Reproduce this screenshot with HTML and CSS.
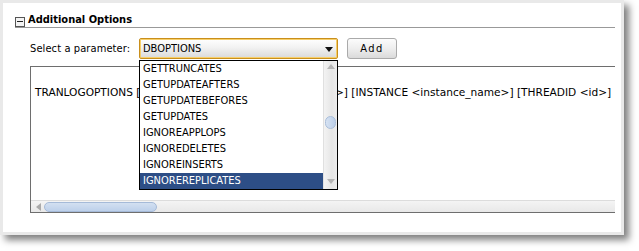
FILE: index.html
```
<html>
<head>
    <title>Additional Options</title>
    <link rel="stylesheet" href="styles.css">
</head>
<body>
    <div class="panel">
        <div class="section-head">
            <span class="toggle"><span class="toggle-minus"></span></span>
            <span class="section-title">Additional Options</span>
        </div>
        <div class="param-row">
            <label class="param-label">Select a parameter:</label>
            <div class="combo">
                <div class="combo-field">
                    <span class="combo-value">DBOPTIONS</span>
                    <span class="combo-arrow"></span>
                </div>
                <div class="combo-popup">
                    <ul class="combo-list">
                        <li>GETTRUNCATES</li>
                        <li>GETUPDATEAFTERS</li>
                        <li>GETUPDATEBEFORES</li>
                        <li>GETUPDATES</li>
                        <li>IGNOREAPPLOPS</li>
                        <li>IGNOREDELETES</li>
                        <li>IGNOREINSERTS</li>
                        <li class="selected">IGNOREREPLICATES</li>
                    </ul>
                    <div class="vscroll">
                        <span class="arrow-up"></span>
                        <span class="vthumb"></span>
                        <span class="arrow-down"></span>
                    </div>
                </div>
            </div>
            <button class="add-btn">Add</button>
        </div>
        <div class="editor">
            <div class="editor-text">TRANLOGOPTIONS [ALTARCHIVELOGDEST &lt;archive_path&gt;] [INSTANCE &lt;instance_name&gt;] [THREADID &lt;id&gt;]</div>
            <div class="hscroll">
                <span class="arrow-left"></span>
                <span class="hthumb"></span>
            </div>
        </div>
    </div>
</body>
</html>
```
FILE: styles.css
```
body {
    margin: 0;
    background-color: #fff;
    font-family: "DejaVu Sans Condensed", "DejaVu Sans", sans-serif;
    font-stretch: condensed;
    font-size: 11px;
    color: #000;
}

.panel {
    box-sizing: border-box;
    width: 624px;
    height: 235px;
    border: 3px solid #e9e9e9;
    background-color: #fff;
    box-shadow: 5px 5px 7px rgba(0, 0, 0, 0.5);
}

.section-head {
    display: flex;
    align-items: center;
    height: 14px;
    margin: 10px 6px 0 12px;
    border-bottom: 1px solid #999;
}

.toggle {
    box-sizing: border-box;
    display: flex;
    align-items: center;
    justify-content: center;
    width: 10px;
    height: 10px;
    margin-top: 3px;
    border: 1px solid #555;
    background-color: #f4f4f4;
}

.toggle-minus {
    width: 6px;
    height: 1px;
    background-color: #222;
}

.section-title {
    margin-left: 3px;
    font-weight: bold;
    font-size: 11px;
    line-height: 14px;
}

.param-row {
    display: flex;
    align-items: center;
    height: 21px;
    margin: 10px 0 0 27px;
}

.param-label {
    width: 109px;
    letter-spacing: 0.1px;
}

.combo {
    position: relative;
    width: 199px;
    height: 21px;
}

.combo-field {
    box-sizing: border-box;
    display: flex;
    align-items: center;
    justify-content: space-between;
    height: 21px;
    padding: 0 4px 0 2px;
    border: 1px solid #c98f1c;
    box-shadow: inset 0 0 0 1px #f7cf6a;
    border-radius: 2px;
    background: linear-gradient(#ffffff, #f2f2f2 45%, #d9d9d9);
}

.combo-value {
    padding-left: 1px;
}

.combo-arrow {
    width: 0;
    height: 0;
    margin-top: 1px;
    border-left: 4px solid transparent;
    border-right: 4px solid transparent;
    border-top: 5px solid #111;
}

.combo-popup {
    position: absolute;
    top: 22px;
    left: 0;
    z-index: 10;
    display: flex;
    box-sizing: border-box;
    width: 199px;
    height: 130px;
    border: 1px solid #000;
    background-color: #fff;
}

.combo-list {
    flex: 1;
    margin: 0;
    padding: 0;
    list-style: none;
}

.combo-list li {
    height: 16px;
    line-height: 16px;
    padding-left: 3px;
}

.combo-list li.selected {
    background-color: #2d4e86;
    color: #fff;
}

.vscroll {
    position: relative;
    width: 13px;
    background: linear-gradient(to right, #f3f3f3, #e6e6e6 60%, #ededed);
    border-left: 1px solid #e0e0e0;
}

.arrow-up,
.arrow-down {
    position: absolute;
    left: 3px;
    width: 0;
    height: 0;
    border-left: 4px solid transparent;
    border-right: 4px solid transparent;
}

.arrow-up {
    top: 3px;
    border-bottom: 5px solid #b5b5b5;
}

.arrow-down {
    bottom: 5px;
    border-top: 5px solid #b5b5b5;
}

.vthumb {
    position: absolute;
    top: 55px;
    left: 1px;
    box-sizing: border-box;
    width: 11px;
    height: 13px;
    border: 1px solid #a9bedb;
    border-radius: 6px;
    background: linear-gradient(to right, #d6e2f2, #bccfe9);
}

.add-btn {
    box-sizing: border-box;
    width: 50px;
    height: 21px;
    margin-left: 9px;
    padding: 0;
    border: 1px solid #aaa;
    border-radius: 3px;
    background: linear-gradient(#fcfcfc, #eeeeee 50%, #dadada);
    font-family: inherit;
    font-stretch: condensed;
    font-size: 11px;
    letter-spacing: 1.5px;
    color: #000;
}

.editor {
    box-sizing: border-box;
    display: flex;
    flex-direction: column;
    width: 585px;
    height: 147px;
    margin: 7px 0 0 27px;
    border: 1px solid #6e6e6e;
    border-right: none;
    overflow: hidden;
}

.editor-text {
    flex: 1;
    padding: 18px 0 0 4px;
    font-family: "DejaVu Sans", sans-serif;
    font-stretch: normal;
    font-size: 10.6px;
    line-height: 14px;
    white-space: nowrap;
}

.hscroll {
    position: relative;
    height: 11px;
    border-top: 1px solid #dcdcdc;
    background: linear-gradient(#f4f4f4, #e8e8e8);
}

.arrow-left {
    position: absolute;
    top: 2px;
    left: 5px;
    width: 0;
    height: 0;
    border-top: 4px solid transparent;
    border-bottom: 4px solid transparent;
    border-right: 5px solid #aaa;
}

.hthumb {
    position: absolute;
    top: 1px;
    left: 13px;
    box-sizing: border-box;
    width: 113px;
    height: 10px;
    border: 1px solid #a5bad8;
    border-radius: 5px;
    background: linear-gradient(#d3e0f1, #bdd0ea);
}
```
